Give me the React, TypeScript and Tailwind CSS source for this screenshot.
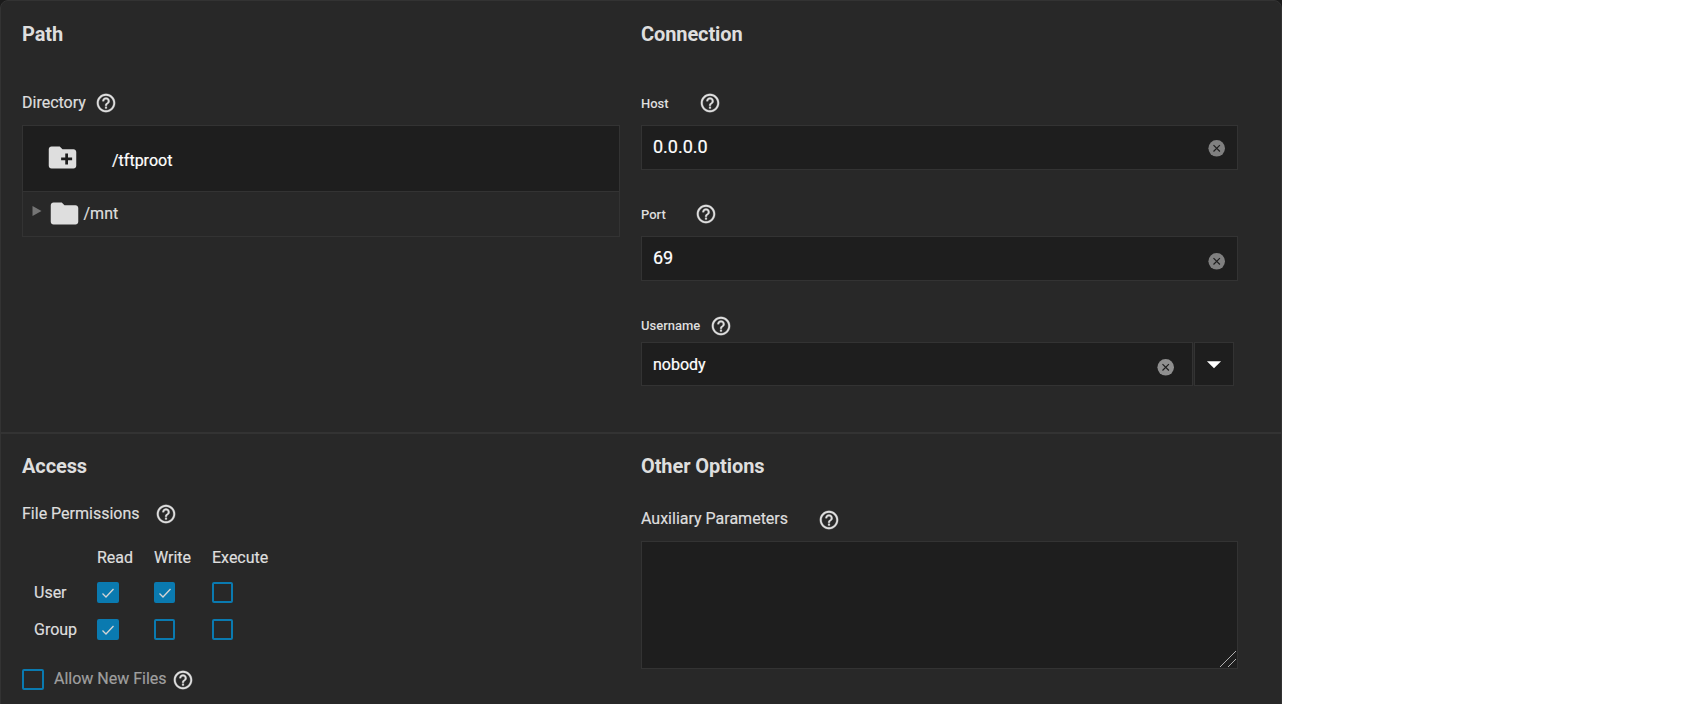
import React from "react";
import { MdFolder, MdCreateNewFolder, MdArrowDropDown } from "react-icons/md";

function Help({ className = "" }: { className?: string }) {
  return (
    <svg width="22" height="22" viewBox="0 0 24 24" className={`shrink-0 ${className}`}>
      <path
        d="M11 18h2v-2h-2v2zm1-16C6.480 2 2 6.480 2 12s4.480 10 10 10 10-4.480 10-10S17.520 2 12 2zm0 18c-4.410 0-8-3.590-8-8s3.590-8 8-8 8 3.590 8 8-3.590 8-8 8zm0-14c-2.210 0-4 1.790-4 4h2c0-1.100.9-2 2-2s2 .9 2 2c0 2-3 1.750-3 5h2c0-2.250 3-2.500 3-5 0-2.210-1.790-4-4-4z"
        fill="#dedede"
        stroke="#dedede"
        strokeWidth="0.3"
      />
    </svg>
  );
}

function Clear({ className = "" }: { className?: string }) {
  return (
    <svg width="17" height="17" viewBox="0 0 17 17" className={`shrink-0 ${className}`}>
      <circle cx="8.7" cy="8.3" r="8.3" fill="currentColor" />
      <path d="M5.5 5.1L11.9 11.5M11.9 5.1L5.5 11.5" stroke="#1e1e1e" strokeWidth="1.2" />
    </svg>
  );
}

function Check({ checked = false, className = "" }: { checked?: boolean; className?: string }) {
  return (
    <span
      className={`flex h-[21px] shrink-0 items-center justify-center rounded-[2px] border-2 border-[#0a7ab0] ${checked ? "bg-[#0a7ab0]" : ""} ${className}`}
    >
      {checked && (
        <svg width="14" height="12" viewBox="0 0 14 12" className="shrink-0">
          <path d="M1.5 6.5L5 10L12.5 2" fill="none" stroke="#d4d4d4" strokeWidth="1.3" />
        </svg>
      )}
    </span>
  );
}

function Title({ children }: { children: React.ReactNode }) {
  return <h3 className="h-6 text-[20px] leading-6 font-bold tracking-[-0.1px] text-[#dedede] [-webkit-text-stroke:0px]">{children}</h3>;
}

export default function App() {
  return (
    <div className="h-[704px] w-[1700px] overflow-hidden bg-white">
      <div className="h-[704px] w-[1282px] bg-[#1b1b1b]">
        <div className="flex h-[720px] flex-col rounded-lg border border-[#333] bg-[#282828] font-['Roboto',sans-serif] text-base leading-5 text-[#dedede] [-webkit-text-stroke:0.2px]">
          <section className="flex h-[433px] border-b-2 border-[#333] pt-[21px] pl-[21px]">
            <div className="w-[598px]">
              <Title>Path</Title>
              <div className="mt-[46px] flex h-[22px] items-start">
                <span className="pt-px">Directory</span>
                <Help className="ml-[9px]" />
              </div>
              <div className="mt-[11px] h-[112px] border border-[#333]">
                <div className="flex h-[66px] items-center border-b border-[#333] bg-[#1e1e1e] pl-[23px] text-white">
                  <MdCreateNewFolder size={33} className="mb-[2px] text-[#dedede]" />
                  <span className="ml-[33px] pt-1">/tftproot</span>
                </div>
                <div className="flex h-[44px] items-center pb-[2px] pl-[9px]">
                  <svg width="10" height="10" viewBox="0 0 10 10" className="mb-1 text-[#757575]">
                    <path d="M0.500 0L9.500 5L0.500 10Z" fill="currentColor" />
                  </svg>
                  <MdFolder size={33} className="ml-[5.5px]" />
                  <span className="ml-[3px] pt-px">/mnt</span>
                </div>
              </div>
            </div>
            <div className="ml-[21px] w-[597px]">
              <Title>Connection</Title>
              <div className="mt-[46px] flex h-[22px] items-center text-[13px] [-webkit-text-stroke:0px]">
                <span className="pt-[2px] font-medium">Host</span>
                <Help className="ml-[30px]" />
              </div>
              <div className="mt-[11px] flex h-[45px] items-center border border-[#333] bg-[#1e1e1e] pr-3 pl-[11px] text-[18px] text-white">
                <span className="grow pb-px">0.0.0.0</span>
                <Clear className="mt-[2px] text-[#808080]" />
              </div>
              <div className="mt-[33px] flex h-[22px] items-center text-[13px] [-webkit-text-stroke:0px]">
                <span className="pt-px font-medium">Port</span>
                <Help className="ml-[29.5px]" />
              </div>
              <div className="mt-[11px] flex h-[45px] items-center border border-[#333] bg-[#1e1e1e] pr-3 pl-[11px] text-[18px] text-white">
                <span className="grow pb-px">69</span>
                <Clear className="mt-[5px] text-[#808080]" />
              </div>
              <div className="mt-[34px] flex h-[22px] items-center text-[13px] [-webkit-text-stroke:0px]">
                <span className="font-medium">Username</span>
                <Help className="ml-[9.5px]" />
              </div>
              <div className="mt-[5px] flex h-[44px] gap-[1px]">
                <div className="flex w-[552px] items-center border border-[#333] bg-[#1e1e1e] pr-[18px] pl-[11px] text-white">
                  <span className="grow pt-[2px]">nobody</span>
                  <Clear className="mt-[6px] text-[#8f8f8f]" />
                </div>
                <div className="flex w-[40px] items-center justify-center border border-[#333] bg-[#1e1e1e] text-white">
                  <MdArrowDropDown size={34} className="shrink-0" />
                </div>
              </div>
            </div>
          </section>
          <section className="flex grow pt-[20px] pl-[21px]">
            <div className="w-[598px]">
              <Title>Access</Title>
              <div className="mt-[25px] flex h-[22px] items-start">
                <span className="pt-px">File Permissions</span>
                <Help className="ml-[15px]" />
              </div>
              <div className="mt-[22px] grid grid-cols-[75px_57px_58px_70px] grid-rows-[35px_37px_37px]">
                <span />
                <span className="pt-px">Read</span>
                <span className="pt-px">Write</span>
                <span className="pt-px">Execute</span>
                <span className="pt-px pl-[12px]">User</span>
                <Check checked className="w-[22px]" />
                <Check checked className="w-[21px]" />
                <Check className="w-[21px]" />
                <span className="pt-px pl-[12px]">Group</span>
                <Check checked className="w-[22px]" />
                <Check className="w-[21px]" />
                <Check className="w-[21px]" />
              </div>
              <div className="mt-[13px] flex">
                <Check className="w-[22px]" />
                <span className="ml-[10px] text-[#9f9f9f]">Allow New Files</span>
                <Help className="ml-[5px]" />
              </div>
            </div>
            <div className="ml-[21px] w-[597px]">
              <Title>Other Options</Title>
              <div className="mt-[31px] flex h-[22px] items-start">
                <span>Auxiliary Parameters</span>
                <Help className="ml-[30px]" />
              </div>
              <div className="mt-[10px] flex h-[128px] items-end justify-end border border-[#333] bg-[#1e1e1e] p-px">
                <svg width="16" height="16" viewBox="0 0 16 16" shapeRendering="crispEdges">
                  <path d="M0 16L16 0M8 16L16 8" stroke="#b0b0b0" strokeWidth="1" />
                </svg>
              </div>
            </div>
          </section>
        </div>
      </div>
    </div>
  );
}
